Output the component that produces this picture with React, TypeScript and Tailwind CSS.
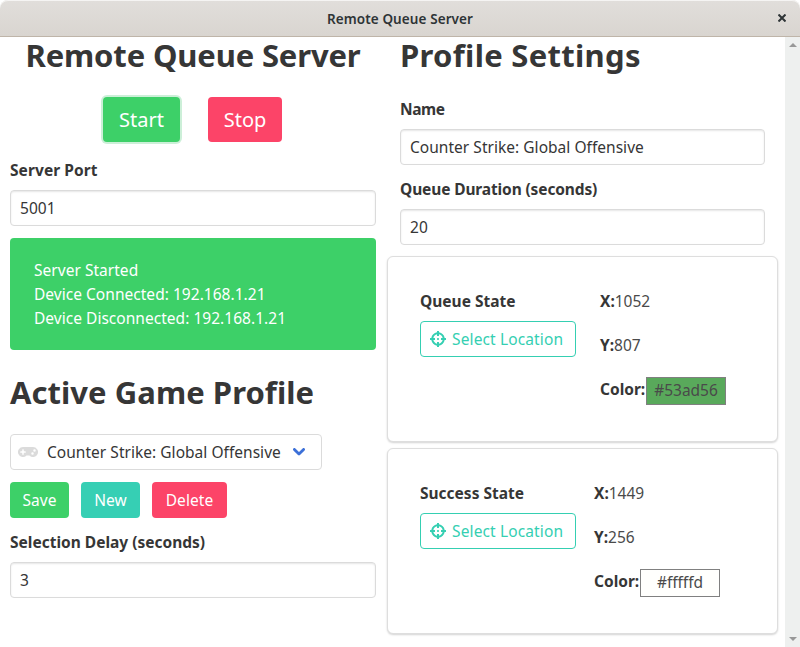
import React from "react";
import { FaCrosshairs, FaGamepad } from "react-icons/fa";

function Heading({ children, className = "" }: { children: string; className?: string }) {
  return (
    <h1 className={"whitespace-nowrap text-[31px] font-bold leading-9 text-[#363636] " + className}>
      {children}
    </h1>
  );
}

function Field({ label, value, track = "" }: { label: string; value: string; track?: string }) {
  return (
    <div className="flex flex-col gap-2">
      <label className={"h-6 whitespace-nowrap font-bold text-[#363636] " + track}>{label}</label>
      <div className="flex h-9 items-center rounded border border-[#dbdbdb] bg-white px-[9px] text-[#363636] shadow-[inset_0_1px_2px_rgba(10,10,10,0.1)]">
        <span className="whitespace-nowrap tracking-[0.03px]">{value}</span>
      </div>
    </div>
  );
}

interface StateProps {
  title: string;
  x: string;
  y: string;
  color: string;
  swatch: string;
  columnWidth: string;
}

function StateCard({ title, x, y, color, swatch, columnWidth }: StateProps) {
  return (
    <section className="flex h-[186px] rounded-md border border-[#dedede] bg-white pl-8 pt-8 shadow-[0_1px_2px_rgba(10,10,10,0.18)]">
      <div className={"flex shrink-0 flex-col items-start gap-2 " + columnWidth}>
        <h2 className="h-6 whitespace-nowrap font-bold text-[#363636]">{title}</h2>
        <button className="flex h-9 w-[156px] items-center gap-1.5 rounded border border-[#35cfb2] pl-[9px] text-[#35cfb2]">
          <FaCrosshairs size={16} className="shrink-0" />
          <span className="whitespace-nowrap tracking-[0.13px]">Select Location</span>
        </button>
      </div>
      <div className="flex flex-col gap-5 whitespace-nowrap">
        <div className="flex h-6"><b className="text-[#363636]">X:</b><span>{x}</span></div>
        <div className="flex h-6"><b className="text-[#363636]">Y:</b><span>{y}</span></div>
        <div className="flex h-6">
          <b className="w-[46px] text-[#363636]">Color:</b>
          <span className={"flex h-7 w-20 items-center justify-center border border-[#808080] pb-0.5 " + swatch}>{color}</span>
        </div>
      </div>
    </section>
  );
}

export default function App() {
  return (
    <div className="flex h-[647px] w-[800px] flex-col overflow-hidden bg-white font-['Noto_Sans',sans-serif] text-[15.5px] leading-6 text-[#4a4a4a]">
      <header className="grid h-[37px] shrink-0 grid-cols-[1fr_auto_1fr] items-center rounded-t-lg border-b border-[#bfb5a9] bg-linear-to-b from-[#e1dedb] to-[#d9d5d0] text-[#2e3436] shadow-[inset_0_1px_0_#f5f4f3]">
        <span />
        <span className="whitespace-nowrap pt-0.5 text-[13.5px] font-semibold tracking-[0.1px]">Remote Queue Server</span>
        <svg className="mr-[14px] justify-self-end" width="8" height="8" viewBox="0 0 8 8" stroke="currentColor" strokeWidth="2">
          <path d="M0.5 0.5 7.5 7.5M7.5 0.5 0.5 7.5" />
        </svg>
      </header>
      <div className="flex min-h-0 flex-1">
        <main className="flex w-[785px] shrink-0 gap-[11px] pl-2.5">
          <div className="flex w-[366px] shrink-0 flex-col">
            <Heading className="self-center tracking-[-0.15px]">Remote Queue Server</Heading>
            <div className="mt-6 flex h-[45px] gap-7 pl-[93px] text-[20px] text-white">
              <button className="w-[77px] rounded bg-[#3dd068] shadow-[0_0_0_2px_rgba(72,199,116,0.28)]">Start</button>
              <button className="w-[74px] rounded bg-[#fc4468]">Stop</button>
            </div>
            <div className="mt-4"><Field label="Server Port" value="5001" track="tracking-[0.08px]" /></div>
            <div className="mt-3 h-28 rounded bg-[#3dd068] px-6 py-5 tracking-[0.03px] text-white">
              <p>Server Started</p>
              <p>Device Connected: 192.168.1.21</p>
              <p>Device Disconnected: 192.168.1.21</p>
            </div>
            <Heading className="mt-6 tracking-[0.05px]">Active Game Profile</Heading>
            <div className="mt-6 flex h-9 w-[312px] items-center rounded border border-[#dbdbdb] pl-[7px] text-[#363636]">
              <FaGamepad className="h-4 w-5 text-[#dbdbdb]" />
              <span className="ml-[9px] w-[246px] whitespace-nowrap tracking-[0.03px]">Counter Strike: Global Offensive</span>
              <svg width="12" height="8" viewBox="0 0 12 8" fill="none" stroke="#3c70d8" strokeWidth="2.8" strokeLinecap="round" strokeLinejoin="round">
                <path d="M1.4 1.4 6 6 10.6 1.4" />
              </svg>
            </div>
            <div className="mt-3 flex h-9 gap-3 text-white">
              <button className="w-[59px] rounded bg-[#3dd068]">Save</button>
              <button className="w-[59px] rounded bg-[#36cfb4]">New</button>
              <button className="w-[75px] rounded bg-[#fc4468] tracking-[0.1px]">Delete</button>
            </div>
            <div className="mt-3"><Field label="Selection Delay (seconds)" value="3" /></div>
          </div>
          <div className="flex w-[391px] shrink-0 flex-col">
            <div className="flex flex-col pl-[13px]">
              <Heading className="tracking-[0.3px]">Profile Settings</Heading>
              <div className="mt-6 flex w-[365px] flex-col gap-3">
                <Field label="Name" value="Counter Strike: Global Offensive" track="tracking-[-0.4px]" />
                <Field label="Queue Duration (seconds)" value="20" track="tracking-[-0.13px]" />
              </div>
            </div>
            <div className="mt-[11px] flex flex-col gap-1.5">
              <StateCard title="Queue State" x="1052" y="807" color="#53ad56" swatch="bg-[#59a95b]" columnWidth="w-[180px]" />
              <StateCard title="Success State" x="1449" y="256" color="#fffffd" swatch="bg-[#fffffd]" columnWidth="w-[174px]" />
            </div>
          </div>
        </main>
        <aside className="flex w-[15px] flex-col items-center justify-between bg-[#eef0ef] py-1.5 text-[#989898]">
          <svg width="8" height="4" viewBox="0 0 8 4" fill="currentColor"><path d="M0 4 4 0 8 4Z" /></svg>
          <svg width="8" height="4" viewBox="0 0 8 4" fill="currentColor"><path d="M0 0 4 4 8 0Z" /></svg>
        </aside>
      </div>
    </div>
  );
}
